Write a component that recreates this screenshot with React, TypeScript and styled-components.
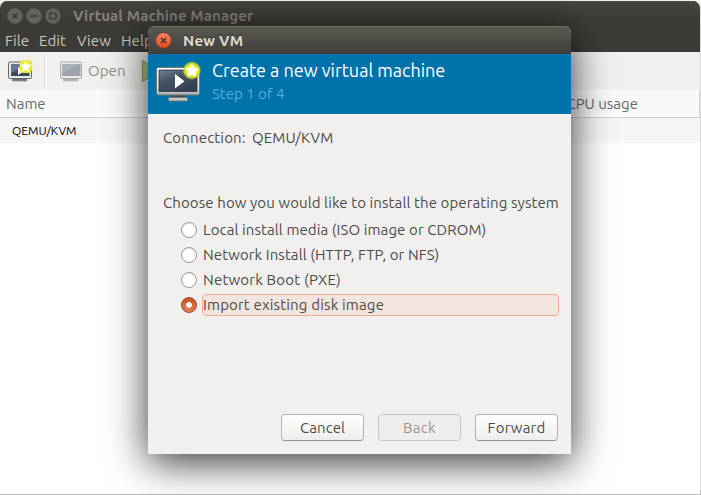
import React from 'react';
import styled, { createGlobalStyle, css } from 'styled-components';

const GlobalStyle = createGlobalStyle`
  * { box-sizing: border-box; }
  html, body { margin: 0; overflow: hidden; background: #dcdcdc; }
  body { font: 15px/20px Ubuntu, "Noto Sans", sans-serif; color: #4c4c4c; }
`;

const Label = styled.span<{ $spacing?: number }>`
  white-space: pre;
  letter-spacing: ${({ $spacing = 0 }) => $spacing}px;
`;

const Desktop = styled.div`
  position: relative;
  width: 701px;
  height: 495px;
  padding: 1px 1px 1px 0;
  overflow: hidden;
  background: linear-gradient(#f0f0f0 0 6px, transparent 6px 490px, #bdbdbd 490px), #dcdcdc;
`;

const MainWindow = styled.main`
  display: flex;
  flex-direction: column;
  height: 493px;
  overflow: hidden;
  border-radius: 7px 7px 0 0;
  background: #fff;
`;

const Chrome = styled.div`
  height: 51px;
  background: linear-gradient(#45443f, #3c3b37 20px);
  box-shadow: inset 0 1px #504f49;
`;

const TitleBar = styled.header`
  display: flex;
  align-items: center;
  height: 29px;
  padding-left: 7px;
  color: #85827b;
  font-weight: bold;
`;

const WindowControls = styled.div`
  display: flex;
  gap: 3px;
  width: 66px;
`;

const MenuBar = styled.nav`
  display: flex;
  align-items: center;
  height: 22px;
  padding-left: 5px;
  color: #cbc7be;
`;

const MenuItem = styled(Label)<{ $width: number }>`
  width: ${({ $width }) => $width}px;
`;

const Toolbar = styled.div`
  display: flex;
  align-items: center;
  height: 38px;
  padding-left: 5px;
  background: #f1f0ee;
  color: #8d8d8b;
`;

const ToolIcon = styled.svg<{ $gap?: number }>`
  flex: none;
  margin-right: ${({ $gap = 0 }) => $gap}px;
`;

const Separator = styled.div`
  width: 2px;
  height: 36px;
  margin-right: 10px;
  border-left: 1px solid #d9d8d6;
  background: #fff;
`;

const OpenLabel = styled(Label)`
  width: 53px;
`;

const Columns = styled.div`
  display: flex;
  align-items: center;
  justify-content: space-between;
  height: 28px;
  padding: 0 61px 0 6px;
  border-bottom: 1px solid #cfcfcf;
  border-right: 1px solid #d4d4d4;
  background: linear-gradient(#fafafa, #f6f6f6 60%, #fdfdfd);
  color: #6a6a6a;
`;

const ConnectionRow = styled.div`
  display: flex;
  align-items: center;
  height: 25px;
  padding-left: 12px;
  background: #f6f6f6;
  color: #000;
  font-size: 12px;
`;

const Dialog = styled.section`
  position: absolute;
  left: 148px;
  top: 26px;
  display: flex;
  flex-direction: column;
  width: 423px;
  height: 428px;
  border-radius: 7px 7px 0 0;
  background: #f1f0ee;
  box-shadow: 0 8px 40px rgba(0, 0, 0, 0.8);
`;

const DialogTitle = styled.header`
  display: flex;
  align-items: center;
  gap: 11px;
  height: 28px;
  padding: 1px 0 0 7px;
  border-radius: 7px 7px 0 0;
  background: linear-gradient(#5b5952, #403f3a);
  box-shadow: inset 0 1px #6c6a61;
  color: #dfdbd2;
  font-weight: bold;
  text-shadow: 0 -1px #302f2b;
`;

const Banner = styled.div`
  display: flex;
  height: 60px;
  padding-left: 7px;
  border-radius: 1px;
  background: #0072aa;
`;

const BannerText = styled.div`
  display: flex;
  flex-direction: column;
  padding: 5px 0 0 8px;
`;

const Heading = styled(Label)`
  height: 25px;
  font-size: 18px;
  line-height: 23px;
  color: #fff;
`;

const Step = styled(Label)`
  color: #59addc;
`;

const Content = styled.div`
  display: flex;
  flex: 1;
  flex-direction: column;
  padding: 14px 12px 13px 15px;
`;

const ConnectionInfo = styled.div`
  display: flex;
  height: 65px;
`;

const ConnectionName = styled(Label)`
  width: 89px;
`;

const Options = styled.div`
  display: flex;
  flex-direction: column;
  gap: 3px;
  padding: 6px 0 0 18px;
`;

const Option = styled.label`
  display: flex;
  align-items: center;
  gap: 5px;
  height: 22px;
`;

const OptionText = styled.span<{ $selected?: boolean }>`
  display: flex;
  flex: 1;
  align-items: center;
  height: 22px;
  border: 1px solid transparent;
  border-radius: 4px;
  ${({ $selected }) => $selected && css`
    border-color: #f2ab91;
    background: #f2e4df;
  `}
`;

const Radio = styled.span<{ $selected?: boolean }>`
  width: 16px;
  height: 16px;
  border: 1px solid #999;
  border-radius: 50%;
  background: #fff;
  box-shadow: inset 0 1px 1px #e7e7e7;
  ${({ $selected }) => $selected && css`
    border-color: #9c4524;
    background: radial-gradient(circle, #fff 2.5px, transparent 3.2px),
      linear-gradient(#c9501f, #e58258);
    box-shadow: none;
  `}
`;

const Actions = styled.div`
  display: flex;
  gap: 14px;
  justify-content: flex-end;
  margin: auto 1px 0 0;
`;

const Button = styled.button`
  width: 83px;
  height: 27px;
  padding: 0;
  border: 1px solid #b3b2b0;
  border-bottom-color: #92918f;
  border-radius: 4px;
  background: linear-gradient(#fff, #eeedeb);
  color: #4c4c4c;
  font: inherit;
  &:disabled {
    border-color: #c7c6c4;
    background: #eeedec;
    color: #979694;
  }
`;

const TitleButton = ({ kind, active }: { kind: 'close' | 'min' | 'max'; active?: boolean }) => (
  <svg width={active ? 17 : 16} height={active ? 17 : 16} viewBox="0 0 16 16">
    <defs>
      <linearGradient id="closeFill" x2="0" y2="1">
        <stop stopColor="#f58763" /><stop offset="1" stopColor="#de481b" />
      </linearGradient>
    </defs>
    <circle cx="8" cy="8" r="7.4" fill={active ? 'url(#closeFill)' : '#64625c'} stroke={active ? '#6b3726' : '#64625c'} strokeWidth=".7" />
    {kind === 'close' && <path d="m5.7 5.7 4.6 4.6m0-4.6-4.6 4.6" stroke="#38332e" strokeWidth="1.3" />}
    {kind === 'min' && <path d="M4.5 8h7" stroke="#383732" strokeWidth="1.3" />}
    {kind === 'max' && <path d="M5 5h6v6H5z" fill="none" stroke="#383732" strokeWidth="1.2" />}
  </svg>
);

const starPath = 'M0-6 1.8-2.2 6-1.6 3 1.4 3.7 5.6 0 3.6-3.7 5.6-3 1.4-6-1.6-1.8-2.2z';

const SmallMonitor = ({ disabled }: { disabled?: boolean }) => (
  <>
    <g opacity={disabled ? 0.5 : 1}>
      <path d="M9 20h12v2H9z" fill="#777" />
      <path d="M7.5 21.3h14v1.5h-14z" fill="#aaa" stroke="#555" strokeWidth=".8" />
      <rect x={disabled ? 4.5 : 3.5} y="4" width={disabled ? 21 : 23} height="16.5" rx="1.3" fill="#e8e8e8" stroke="#65676a" />
      <path d="M6 6h18.5v12H6z" fill={disabled ? '#4a5870' : '#3e495a'} />
      <path d="M6 6h18.5L6 15z" fill="#65768c" />
    </g>
    {!disabled && (
      <>
        <path d="M13 9v8l6-4z" fill="#fff" />
        <g transform="translate(20.7 8.5)">
          <rect x="-6.2" y="-6.2" width="12.7" height="12.7" rx="4.5" fill="#e9ed22" />
          <path d={starPath} fill="#fff" stroke="#fff" strokeWidth=".5" transform="scale(.9)" />
        </g>
      </>
    )}
  </>
);

const LargeMonitor = () => (
  <svg width="49" height="60" viewBox="155 54 49 60">
    <defs>
      <linearGradient id="screen" x2=".6" y2="1">
        <stop stopColor="#718092" /><stop offset=".45" stopColor="#475467" /><stop offset="1" stopColor="#354052" />
      </linearGradient>
      <linearGradient id="bezel" x2="0" y2="1">
        <stop stopColor="#fff" /><stop offset=".8" stopColor="#ddd" /><stop offset="1" stopColor="#a6a6a6" />
      </linearGradient>
      <radialGradient id="glow">
        <stop offset=".55" stopColor="#f3f52a" /><stop offset=".8" stopColor="#d0de27" stopOpacity=".85" />
        <stop offset="1" stopColor="#b9d329" stopOpacity="0" />
      </radialGradient>
    </defs>
    <path d="M172 95h12l1 4h-14z" fill="#4a4b4d" />
    <rect x="168.5" y="97.5" width="19" height="3.5" rx=".8" fill="#c6c6c6" stroke="#727577" />
    <rect x="156.5" y="67.5" width="43" height="27.5" rx="2" fill="url(#bezel)" stroke="#717476" />
    <path d="M159 70h38v21.5h-38z" fill="url(#screen)" stroke="#283444" strokeWidth=".8" />
    <path d="M175 74v14.5l9.5-7.2z" fill="#fff" />
    <circle cx="191.8" cy="70.5" r="9.5" fill="url(#glow)" />
    <path d={starPath} transform="translate(191.8 70.5) scale(1.02)" fill="#fff" stroke="#fff" strokeWidth=".8" strokeLinejoin="round" />
  </svg>
);

const menus = [
  { text: 'File', width: 34 },
  { text: 'Edit', width: 38 },
  { text: 'View', width: 44 },
  { text: 'Help', width: 40 },
];

const options = [
  { text: 'Local install media (ISO image or CDROM)', spacing: 0.1 },
  { text: 'Network Install (HTTP, FTP, or NFS)', spacing: 0.09 },
  { text: 'Network Boot (PXE)', spacing: 0.2 },
  { text: 'Import existing disk image', spacing: 0.17, selected: true },
];

export default function App() {
  return (
    <Desktop>
      <GlobalStyle />
      <MainWindow>
        <Chrome>
          <TitleBar>
            <WindowControls>
              <TitleButton kind="close" />
              <TitleButton kind="min" />
              <TitleButton kind="max" />
            </WindowControls>
            <Label $spacing={0.11}>Virtual Machine Manager</Label>
          </TitleBar>
          <MenuBar>
            {menus.map((m) => <MenuItem key={m.text} $width={m.width} $spacing={0.1}>{m.text}</MenuItem>)}
          </MenuBar>
        </Chrome>
        <Toolbar>
          <ToolIcon width="30" height="26" $gap={9}><SmallMonitor /></ToolIcon>
          <Separator />
          <ToolIcon width="30" height="26" $gap={2}><SmallMonitor disabled /></ToolIcon>
          <OpenLabel $spacing={0.1}>Open</OpenLabel>
          <ToolIcon width="20" height="24"><path d="M1.5 1.5v21l17-10.5z" fill="#b5ce87" stroke="#829d57" /></ToolIcon>
        </Toolbar>
        <Columns>
          <Label>Name</Label>
          <Label>CPU usage</Label>
        </Columns>
        <ConnectionRow><Label $spacing={0.03}>QEMU/KVM</Label></ConnectionRow>
      </MainWindow>
      <Dialog>
        <DialogTitle>
          <TitleButton kind="close" active />
          <Label $spacing={0.25}>New VM</Label>
        </DialogTitle>
        <Banner>
          <LargeMonitor />
          <BannerText>
            <Heading>Create a new virtual machine</Heading>
            <Step>Step 1 of 4</Step>
          </BannerText>
        </Banner>
        <Content>
          <ConnectionInfo>
            <ConnectionName $spacing={0.16}>Connection:</ConnectionName>
            <Label $spacing={0.12}>QEMU/KVM</Label>
          </ConnectionInfo>
          <Label $spacing={0.1}>Choose how you would like to install the operating system</Label>
          <Options>
            {options.map((o) => (
              <Option key={o.text}>
                <Radio $selected={o.selected} />
                <OptionText $selected={o.selected}><Label $spacing={o.spacing}>{o.text}</Label></OptionText>
              </Option>
            ))}
          </Options>
          <Actions>
            <Button><Label $spacing={0.05}>Cancel</Label></Button>
            <Button disabled><Label $spacing={0.3}>Back</Label></Button>
            <Button><Label $spacing={0.2}>Forward</Label></Button>
          </Actions>
        </Content>
      </Dialog>
    </Desktop>
  );
}
